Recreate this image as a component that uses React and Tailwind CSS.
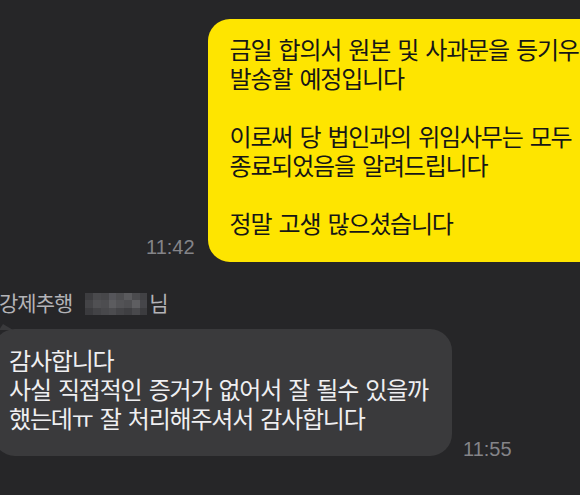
import React from 'react';

const mosaic = [
  '#3d3d40', '#4a4a4d', '#47474a', '#55555a', '#4e4e51', '#5a5a5d', '#4b4b4e', '#424245',
  '#444447', '#505053', '#4d4d50', '#5c5c5f', '#535356', '#4f4f52', '#5e5e61', '#46464a',
  '#3b3b3e', '#434346', '#48484b', '#4c4c4f', '#444447', '#3f3f42', '#49494c', '#3c3c3f',
];

const mine = `금일 합의서 원본 및 사과문을 등기우편으로
발송할 예정입니다

이로써 당 법인과의 위임사무는 모두
종료되었음을 알려드립니다

정말 고생 많으셨습니다`;

const theirs = `감사합니다
사실 직접적인 증거가 없어서 잘 될수 있을까
했는데ㅠ 잘 처리해주셔서 감사합니다`;

export default function App() {
  return (
    <div className="w-[580px] h-[495px] overflow-hidden bg-[#262628] font-['Noto_Sans_CJK_KR','Noto_Sans',sans-serif]">
      {/* sent message */}
      <div className="flex items-end pl-[146px] pt-[19px]">
        <span className="mr-[13px] mb-[3px] font-['Liberation_Sans',sans-serif] text-[20px] leading-[24px] text-[#848488]">11:42</span>
        <div className="shrink-0 w-[430px] rounded-[22px] bg-[#fee500] pl-[22px] pt-[15px] pb-[25px] text-[24px] leading-[29px] tracking-[-1.2px] [word-spacing:3px] whitespace-pre text-[#161616]">
          {mine}
        </div>
      </div>

      {/* sender name */}
      <div className="flex items-start mt-[28px] -ml-[1px] text-[21px] leading-[24px] tracking-[-1px] text-[#b3b3b7]">
        <span>강제추행</span>
        <div className="grid grid-cols-8 mt-[3px] ml-[13px] mr-[2px] w-[62px] h-[22px]">
          {mosaic.map((c, i) => (
            <div key={i} style={{ backgroundColor: c }} />
          ))}
        </div>
        <span>님</span>
      </div>

      {/* received message */}
      <div className="flex items-end mt-[14px] -ml-[7px]">
        <div className="relative shrink-0 w-[459px] rounded-[22px] bg-[#3a3a3c] pl-[16px] pt-[16px] pb-[24px] text-[24px] leading-[29px] tracking-[-1.2px] [word-spacing:3px] whitespace-pre text-[#efeff1]">
          <svg className="absolute left-[6px] -top-[5px]" width="14" height="6" viewBox="0 0 14 6">
            <polygon points="0,6 4,0 14,6" fill="#3a3a3c" />
          </svg>
          {theirs}
        </div>
        <span className="ml-[11px] -mb-[5px] font-['Liberation_Sans',sans-serif] text-[20px] leading-[24px] text-[#848488]">11:55</span>
      </div>
    </div>
  );
}
